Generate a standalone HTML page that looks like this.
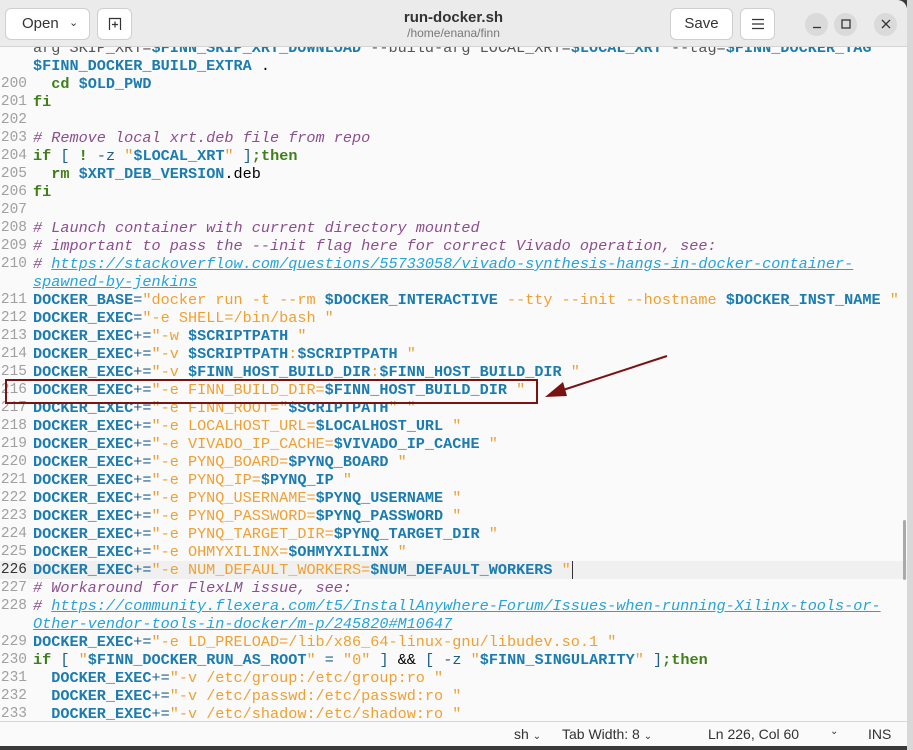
<!DOCTYPE html>
<html><head><meta charset="utf-8"><style>
*{margin:0;padding:0;box-sizing:border-box}
html,body{width:913px;height:750px;overflow:hidden;background:#3a3a3a;font-family:"Liberation Sans",sans-serif}
#win{position:absolute;left:0;top:0;width:907px;height:746px;background:#fafafa;overflow:hidden;border-top-right-radius:10px}
#side{position:absolute;left:907px;top:0;width:6px;height:750px;background:#d8d8d8}
#hdr{position:absolute;left:0;top:0;width:907px;height:47px;background:#ebebeb;border-bottom:1px solid #d4d4d4;z-index:5}
.btn{position:absolute;top:8px;height:32px;background:#fff;border:1px solid #cfcfcf;border-radius:6px;font-size:15px;color:#333;text-align:center;line-height:30px}
.circ{position:absolute;top:13px;width:23px;height:23px;border-radius:50%;background:#dadada;color:#333;text-align:center;line-height:23px;font-size:14px}
#code{position:absolute;left:0;top:39px;width:907px;font-family:"Liberation Mono",monospace;font-size:15.2px}
.r{position:relative;height:18px;line-height:18px;white-space:pre}
.n{position:absolute;left:0;width:27px;text-align:right;color:#a0a0a0;font-size:14.5px}
.t{position:absolute;left:33px}
.k{color:#3f7f1a;font-weight:bold}
.v{color:#1c7cb0;font-weight:bold}
.o{color:#1c5f8a}
.s{color:#f0a030}
.c{color:#8b4f8f;font-style:italic}
.l{color:#27a3d8;font-style:italic;text-decoration:underline}
.g{color:#555}
.cur{background:#f0f0f0}
#stat{position:absolute;left:0;top:721px;width:907px;height:25px;background:#fafafa;border-top:1px solid #d8d8d8;font-size:14px;color:#333;z-index:5}
#stat span{position:absolute;top:4px}
</style></head><body>
<div id="side"></div>
<div id="win">
<div id="code">
<div class="r"><span class="t"><span class="g">arg SKIP_XRT=</span><span class="v">$FINN_SKIP_XRT_DOWNLOAD</span><span class="g"> --build-arg LOCAL_XRT=</span><span class="v">$LOCAL_XRT</span><span class="g"> --tag=</span><span class="v">$FINN_DOCKER_TAG</span></span></div>
<div class="r"><span class="t"><span class="v">$FINN_DOCKER_BUILD_EXTRA</span> .</span></div>
<div class="r"><span class="n">200</span><span class="t">  <span class="k">cd</span> <span class="v">$OLD_PWD</span></span></div>
<div class="r"><span class="n">201</span><span class="t"><span class="k">fi</span></span></div>
<div class="r"><span class="n">202</span></div>
<div class="r"><span class="n">203</span><span class="t"><span class="c"># Remove local xrt.deb file from repo</span></span></div>
<div class="r"><span class="n">204</span><span class="t"><span class="k">if</span> <span class="o">[</span> <span class="k">!</span> <span class="o">-z</span> <span class="s">"</span><span class="v">$LOCAL_XRT</span><span class="s">"</span> <span class="o">]</span><span class="k">;then</span></span></div>
<div class="r"><span class="n">205</span><span class="t">  <span class="k">rm</span> <span class="v">$XRT_DEB_VERSION</span>.deb</span></div>
<div class="r"><span class="n">206</span><span class="t"><span class="k">fi</span></span></div>
<div class="r"><span class="n">207</span></div>
<div class="r"><span class="n">208</span><span class="t"><span class="c"># Launch container with current directory mounted</span></span></div>
<div class="r"><span class="n">209</span><span class="t"><span class="c"># important to pass the --init flag here for correct Vivado operation, see:</span></span></div>
<div class="r"><span class="n">210</span><span class="t"><span class="c"># </span><span class="l">https://stackoverflow.com/questions/55733058/vivado-synthesis-hangs-in-docker-container-</span></span></div>
<div class="r"><span class="t"><span class="l">spawned-by-jenkins</span></span></div>
<div class="r"><span class="n">211</span><span class="t"><span class="v">DOCKER_BASE</span><span class="o">=</span><span class="s">"docker run -t --rm </span><span class="v">$DOCKER_INTERACTIVE</span><span class="s"> --tty --init --hostname </span><span class="v">$DOCKER_INST_NAME</span><span class="s"> "</span></span></div>
<div class="r"><span class="n">212</span><span class="t"><span class="v">DOCKER_EXEC</span><span class="o">=</span><span class="s">"-e SHELL=/bin/bash "</span></span></div>
<div class="r"><span class="n">213</span><span class="t"><span class="v">DOCKER_EXEC</span><span class="o">+=</span><span class="s">"-w </span><span class="v">$SCRIPTPATH</span><span class="s"> "</span></span></div>
<div class="r"><span class="n">214</span><span class="t"><span class="v">DOCKER_EXEC</span><span class="o">+=</span><span class="s">"-v </span><span class="v">$SCRIPTPATH</span><span class="s">:</span><span class="v">$SCRIPTPATH</span><span class="s"> "</span></span></div>
<div class="r"><span class="n">215</span><span class="t"><span class="v">DOCKER_EXEC</span><span class="o">+=</span><span class="s">"-v </span><span class="v">$FINN_HOST_BUILD_DIR</span><span class="s">:</span><span class="v">$FINN_HOST_BUILD_DIR</span><span class="s"> "</span></span></div>
<div class="r"><span class="n">216</span><span class="t"><span class="v">DOCKER_EXEC</span><span class="o">+=</span><span class="s">"-e FINN_BUILD_DIR=</span><span class="v">$FINN_HOST_BUILD_DIR</span><span class="s"> "</span></span></div>
<div class="r"><span class="n">217</span><span class="t"><span class="v">DOCKER_EXEC</span><span class="o">+=</span><span class="s">"-e FINN_ROOT="</span><span class="v">$SCRIPTPATH</span><span class="s">" "</span></span></div>
<div class="r"><span class="n">218</span><span class="t"><span class="v">DOCKER_EXEC</span><span class="o">+=</span><span class="s">"-e LOCALHOST_URL=</span><span class="v">$LOCALHOST_URL</span><span class="s"> "</span></span></div>
<div class="r"><span class="n">219</span><span class="t"><span class="v">DOCKER_EXEC</span><span class="o">+=</span><span class="s">"-e VIVADO_IP_CACHE=</span><span class="v">$VIVADO_IP_CACHE</span><span class="s"> "</span></span></div>
<div class="r"><span class="n">220</span><span class="t"><span class="v">DOCKER_EXEC</span><span class="o">+=</span><span class="s">"-e PYNQ_BOARD=</span><span class="v">$PYNQ_BOARD</span><span class="s"> "</span></span></div>
<div class="r"><span class="n">221</span><span class="t"><span class="v">DOCKER_EXEC</span><span class="o">+=</span><span class="s">"-e PYNQ_IP=</span><span class="v">$PYNQ_IP</span><span class="s"> "</span></span></div>
<div class="r"><span class="n">222</span><span class="t"><span class="v">DOCKER_EXEC</span><span class="o">+=</span><span class="s">"-e PYNQ_USERNAME=</span><span class="v">$PYNQ_USERNAME</span><span class="s"> "</span></span></div>
<div class="r"><span class="n">223</span><span class="t"><span class="v">DOCKER_EXEC</span><span class="o">+=</span><span class="s">"-e PYNQ_PASSWORD=</span><span class="v">$PYNQ_PASSWORD</span><span class="s"> "</span></span></div>
<div class="r"><span class="n">224</span><span class="t"><span class="v">DOCKER_EXEC</span><span class="o">+=</span><span class="s">"-e PYNQ_TARGET_DIR=</span><span class="v">$PYNQ_TARGET_DIR</span><span class="s"> "</span></span></div>
<div class="r"><span class="n">225</span><span class="t"><span class="v">DOCKER_EXEC</span><span class="o">+=</span><span class="s">"-e OHMYXILINX=</span><span class="v">$OHMYXILINX</span><span class="s"> "</span></span></div>
<div class="r cur"><span class="n" style="color:#333">226</span><span class="t"><span class="v">DOCKER_EXEC</span><span class="o">+=</span><span class="s">"-e NUM_DEFAULT_WORKERS=</span><span class="v">$NUM_DEFAULT_WORKERS</span><span class="s"> "</span><span style="border-left:1px solid #333;margin-left:1px"></span></span></div>
<div class="r"><span class="n">227</span><span class="t"><span class="c"># Workaround for FlexLM issue, see:</span></span></div>
<div class="r"><span class="n">228</span><span class="t"><span class="c"># </span><span class="l">https://community.flexera.com/t5/InstallAnywhere-Forum/Issues-when-running-Xilinx-tools-or-</span></span></div>
<div class="r"><span class="t"><span class="l">Other-vendor-tools-in-docker/m-p/245820#M10647</span></span></div>
<div class="r"><span class="n">229</span><span class="t"><span class="v">DOCKER_EXEC</span><span class="o">+=</span><span class="s">"-e LD_PRELOAD=/lib/x86_64-linux-gnu/libudev.so.1 "</span></span></div>
<div class="r"><span class="n">230</span><span class="t"><span class="k">if</span> <span class="o">[</span> <span class="s">"</span><span class="v">$FINN_DOCKER_RUN_AS_ROOT</span><span class="s">"</span> <span class="o">=</span> <span class="s">"0"</span> <span class="o">]</span> &amp;&amp; <span class="o">[</span> <span class="o">-z</span> <span class="s">"</span><span class="v">$FINN_SINGULARITY</span><span class="s">"</span> <span class="o">]</span><span class="k">;then</span></span></div>
<div class="r"><span class="n">231</span><span class="t">  <span class="v">DOCKER_EXEC</span><span class="o">+=</span><span class="s">"-v /etc/group:/etc/group:ro "</span></span></div>
<div class="r"><span class="n">232</span><span class="t">  <span class="v">DOCKER_EXEC</span><span class="o">+=</span><span class="s">"-v /etc/passwd:/etc/passwd:ro "</span></span></div>
<div class="r"><span class="n">233</span><span class="t">  <span class="v">DOCKER_EXEC</span><span class="o">+=</span><span class="s">"-v /etc/shadow:/etc/shadow:ro "</span></span></div>
<div class="r"><span class="n">234</span><span class="t">  <span class="v">DOCKER_EXEC</span><span class="o">+=</span><span class="s">"-v /etc/sudoers.d:/etc/sudoers.d:ro "</span></span></div>
</div>
<div style="position:absolute;left:5px;top:379px;width:533px;height:25px;border:2px solid #7a1212"></div>
<svg style="position:absolute;left:0;top:0" width="907" height="746"><line x1="667" y1="356" x2="560" y2="391" stroke="#7a1212" stroke-width="2"/><polygon points="545,397 563,382 567,396" fill="#7a1212"/></svg>
<div style="position:absolute;left:903px;top:520px;width:3px;height:60px;background:#aaa;border-radius:2px"></div>
<div id="hdr">
<div class="btn" style="left:5px;width:85px;text-align:left;padding-left:16px">Open <span style="position:absolute;left:63px;top:-1px;font-size:11px">&#8964;</span></div>
<div class="btn" style="left:97px;width:35px"><svg width="14" height="14" viewBox="0 0 14 14" style="margin-top:8px"><path d="M1.5 13V1.5H12.5V13M7 4.5V10.5M4 7.5H10" fill="none" stroke="#333" stroke-width="1.2"/></svg></div>
<div style="position:absolute;left:0;width:907px;top:9px;text-align:center;font-size:15px;font-weight:bold;color:#333">run-docker.sh</div>
<div style="position:absolute;left:0;width:907px;top:26px;text-align:center;font-size:12px;color:#777">/home/enana/finn</div>
<div class="btn" style="left:670px;width:63px">Save</div>
<div class="btn" style="left:740px;width:35px"><svg width="14" height="12" viewBox="0 0 14 12" style="margin-top:9px"><path d="M1 1.5H13M1 6H13M1 10.5H13" stroke="#333" stroke-width="1.2"/></svg></div>
<div class="circ" style="left:805px"><svg width="10" height="10" viewBox="0 0 10 10"><path d="M1 8.5H9" stroke="#333" stroke-width="1.3"/></svg></div>
<div class="circ" style="left:834px"><svg width="10" height="10" viewBox="0 0 10 10"><rect x="1" y="1" width="8" height="8" fill="none" stroke="#333" stroke-width="1.3"/></svg></div>
<div class="circ" style="left:874px"><svg width="10" height="10" viewBox="0 0 10 10"><path d="M1 1L9 9M9 1L1 9" stroke="#333" stroke-width="1.3"/></svg></div>
</div>
<div id="stat">
<span style="left:514px">sh <small style="font-size:10px">&#8964;</small></span>
<span style="left:562px">Tab Width: 8 <small style="font-size:10px">&#8964;</small></span>
<span style="left:708px">Ln 226, Col 60</span>
<span style="left:830px;font-size:10px">&#8964;</span>
<span style="left:868px">INS</span>
</div>
</div>
</body></html>
